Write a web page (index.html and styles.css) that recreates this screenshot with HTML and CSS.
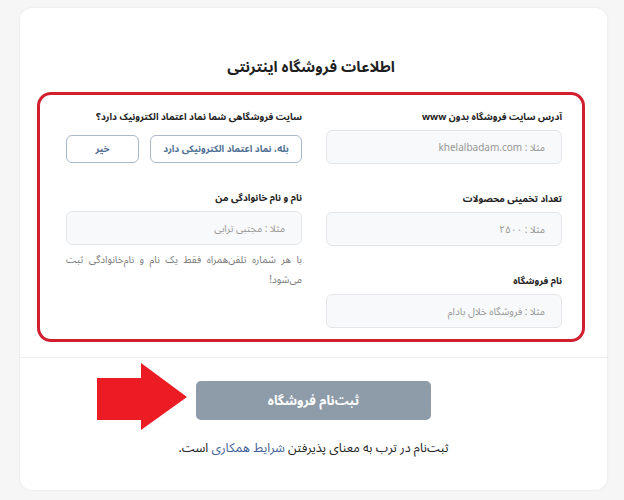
FILE: index.html
```html
<!DOCTYPE html>
<html lang="fa" dir="rtl">
<head>
<meta charset="utf-8">
<link rel="stylesheet" href="styles.css">
</head>
<body>
<div class="card">
  <div class="card-top">
    <h1 class="title">اطلاعات فروشگاه اینترنتی</h1>
    <div class="redbox">
      <div class="col">
        <label class="lbl">آدرس سایت فروشگاه بدون www</label>
        <div class="input">مثلا : khelalbadam.com</div>
        <label class="lbl lbl-gap">تعداد تخمینی محصولات</label>
        <div class="input">مثلا : ۲۵۰۰</div>
        <label class="lbl lbl-gap">نام فروشگاه</label>
        <div class="input">مثلا : فروشگاه خلال بادام</div>
      </div>
      <div class="col">
        <label class="lbl">سایت فروشگاهی شما نماد اعتماد الکترونیک دارد؟</label>
        <div class="choices">
          <div class="choice choice-yes">بله، نماد اعتماد الکترونیکی دارد</div>
          <div class="choice choice-no">خیر</div>
        </div>
        <label class="lbl lbl-gap">نام و نام خانوادگی من</label>
        <div class="input">مثلا : مجتبی ترابی</div>
        <p class="help">با هر شماره تلفن‌همراه فقط یک نام و نام‌خانوادگی ثبت می‌شود!</p>
      </div>
    </div>
  </div>
  <div class="card-bottom">
    <svg class="arrow" width="92" height="68" viewBox="0 0 92 68">
      <polygon points="0,15 44,15 44,0 90,34 44,67 44,57 0,57" fill="#ec1c24"/>
    </svg>
    <div class="submit">ثبت‌نام فروشگاه</div>
    <p class="terms">ثبت‌نام در ترب به معنای پذیرفتن <a class="link">شرایط همکاری</a> است.</p>
  </div>
</div>
</body>
</html>
```
FILE: styles.css
```css
html, body { margin: 0; padding: 0; }
body {
  background: #f6f6f6;
  font-family: "Noto Sans Arabic", "DejaVu Sans Condensed", "DejaVu Sans", sans-serif;
  color: #222;
  width: 624px;
  height: 500px;
  overflow: hidden;
}
.card {
  position: relative;
  margin: 8px 17px 0 20px;
  width: 587px;
  height: 482px;
  background: #fff;
  border-radius: 12px;
  box-shadow: 0 0 3px rgba(0,0,0,0.08);
  box-sizing: border-box;
}
.card-top {
  padding: 47px 22px 15px 17px;
  border-bottom: 1px solid #eeeeee;
}
.title {
  margin: 0 0 12px;
  text-align: center;
  font-size: 15px;
  font-weight: bold;
  line-height: 25px;
  color: #1f1f1f;
}
.redbox {
  border: 3px solid #d11f2f;
  border-radius: 14px;
  display: grid;
  grid-template-columns: 236px 236px;
  column-gap: 24px;
  padding: 13px 20px 9px 26px;
  height: 250px;
  box-sizing: border-box;
}
.col { display: flex; flex-direction: column; }
.lbl {
  font-size: 9.5px;
  font-weight: bold;
  line-height: 18px;
  color: #222;
  white-space: nowrap;
}
.lbl-gap { margin-top: 26px; }
.input {
  margin-top: 4px;
  height: 34px;
  box-sizing: border-box;
  border: 1px solid #e4e6e9;
  border-radius: 6px;
  background: #f8f9fa;
  padding: 0 16px;
  display: flex;
  align-items: center;
  font-size: 10px;
  color: #969696;
}
.choices {
  margin-top: 9px;
  display: flex;
  gap: 11px;
}
.choice {
  height: 28px;
  box-sizing: border-box;
  border: 1px solid #a9b9c9;
  border-radius: 6px;
  display: flex;
  align-items: center;
  justify-content: center;
  font-size: 9.5px;
  font-weight: bold;
  color: #4f6f93;
  white-space: nowrap;
}
.choice-yes { width: 152px; }
.choice-no { width: 73px; }
.help {
  margin: 5px 0 0;
  font-size: 10px;
  line-height: 20px;
  color: #7a7a7a;
  text-align: justify;
}
.card-bottom {
  padding-top: 23px;
  display: flex;
  flex-direction: column;
  align-items: center;
}
.submit {
  width: 235px;
  height: 39px;
  border-radius: 5px;
  background: #8e9ba8;
  color: #fff;
  font-size: 13px;
  font-weight: bold;
  display: flex;
  align-items: center;
  justify-content: center;
}
.terms {
  margin: 18px 0 0;
  font-size: 12.5px;
  line-height: 20px;
  color: #222;
}
.link { color: #3d5f98; }
.arrow {
  position: absolute;
  left: 77px;
  top: 355px;
}
```
